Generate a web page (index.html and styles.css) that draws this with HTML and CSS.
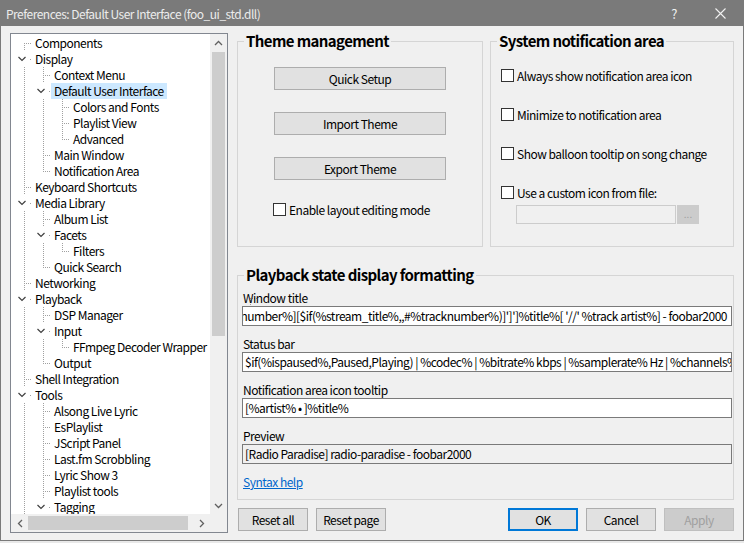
FILE: index.html
```html
<!DOCTYPE html>
<html lang="en">
<head>
    <meta charset="UTF-8">
    <title>Preferences: Default User Interface (foo_ui_std.dll)</title>
    <link rel="stylesheet" href="styles.css">
</head>
<body>
    <div class="window">
        <div class="titlebar">
            <span class="title">Preferences: Default User Interface (foo_ui_std.dll)</span>
            <span class="caption-btn">?</span>
            <span class="caption-btn">
                <svg width="11" height="11" viewBox="0 0 11 11"><path d="M0.5 0.5 L10.5 10.5 M10.5 0.5 L0.5 10.5" stroke="#f2f2f2" stroke-width="1.1" fill="none"/></svg>
            </span>
        </div>

        <div class="body">
            <!-- Page tree -->
            <div class="tree">
                <div class="tree-rows" id="treeRows"></div>
                <div class="vscroll">
                    <div class="arrow">
                        <svg width="9" height="6" viewBox="0 0 9 6"><polyline points="1,5 4.5,1.5 8,5" stroke="#606060" stroke-width="1.3" fill="none"/></svg>
                    </div>
                    <div class="vtrack"><div class="vthumb"></div></div>
                    <div class="arrow">
                        <svg width="9" height="6" viewBox="0 0 9 6"><polyline points="1,1 4.5,4.5 8,1" stroke="#606060" stroke-width="1.3" fill="none"/></svg>
                    </div>
                </div>
                <div class="hscroll">
                    <div class="arrow">
                        <svg width="6" height="9" viewBox="0 0 6 9"><polyline points="5,1 1.5,4.5 5,8" stroke="#606060" stroke-width="1.3" fill="none"/></svg>
                    </div>
                    <div class="htrack"><div class="hthumb"></div></div>
                    <div class="arrow">
                        <svg width="6" height="9" viewBox="0 0 6 9"><polyline points="1,1 4.5,4.5 1,8" stroke="#606060" stroke-width="1.3" fill="none"/></svg>
                    </div>
                </div>
                <div class="scroll-corner"></div>
            </div>

            <!-- Page content -->
            <div class="pages">
                <div class="top-groups">
                    <div class="group theme">
                        <h3>Theme management</h3>
                        <button class="btn wide first">Quick Setup</button>
                        <button class="btn wide">Import Theme</button>
                        <button class="btn wide">Export Theme</button>
                        <label class="check layout-mode"><span class="box"></span>Enable layout editing mode</label>
                    </div>
                    <div class="group notify">
                        <h3>System notification area</h3>
                        <label class="check"><span class="box"></span>Always show notification area icon</label>
                        <label class="check"><span class="box"></span>Minimize to notification area</label>
                        <label class="check"><span class="box"></span>Show balloon tooltip on song change</label>
                        <label class="check"><span class="box"></span>Use a custom icon from file:</label>
                        <div class="file-row">
                            <div class="file-field"></div>
                            <div class="file-btn">...</div>
                        </div>
                    </div>
                </div>

                <div class="group playback">
                    <h3>Playback state display formatting</h3>
                    <div class="field-label first">Window title</div>
                    <div class="edit scrolled"><span>[%album%][ #%tracknumber%][$if(%stream_title%,,#%tracknumber%)]']']%title%[ '//' %track artist%] - foobar2000</span></div>
                    <div class="field-label">Status bar</div>
                    <div class="edit">$if(%ispaused%,Paused,Playing) | %codec% | %bitrate% kbps | %samplerate% Hz | %channels% | %playback_time%[ / %length%]</div>
                    <div class="field-label">Notification area icon tooltip</div>
                    <div class="edit">[%artist% • ]%title%</div>
                    <div class="field-label">Preview</div>
                    <div class="edit readonly">[Radio Paradise] radio-paradise - foobar2000</div>
                    <a class="syntax" href="#">Syntax help</a>
                </div>

                <div class="buttons">
                    <div class="btn-group">
                        <button class="btn">Reset all</button>
                        <button class="btn">Reset page</button>
                    </div>
                    <div class="btn-group">
                        <button class="btn default">OK</button>
                        <button class="btn">Cancel</button>
                        <button class="btn disabled">Apply</button>
                    </div>
                </div>
            </div>
        </div>
    </div>

    <script>
        // depth, label, expandable, selected
        const items = [
            [0, 'Components'],
            [0, 'Display', 1],
            [1, 'Context Menu'],
            [1, 'Default User Interface', 1, 1],
            [2, 'Colors and Fonts'],
            [2, 'Playlist View'],
            [2, 'Advanced'],
            [1, 'Main Window'],
            [1, 'Notification Area'],
            [0, 'Keyboard Shortcuts'],
            [0, 'Media Library', 1],
            [1, 'Album List'],
            [1, 'Facets', 1],
            [2, 'Filters'],
            [1, 'Quick Search'],
            [0, 'Networking'],
            [0, 'Playback', 1],
            [1, 'DSP Manager'],
            [1, 'Input', 1],
            [2, 'FFmpeg Decoder Wrapper'],
            [1, 'Output'],
            [0, 'Shell Integration'],
            [0, 'Tools', 1],
            [1, 'Alsong Live Lyric'],
            [1, 'EsPlaylist'],
            [1, 'JScript Panel'],
            [1, 'Last.fm Scrobbling'],
            [1, 'Lyric Show 3'],
            [1, 'Playlist tools'],
            [1, 'Tagging', 1]
        ];

        // does the node at index i have a sibling further down?
        function hasNext(i) {
            const d = items[i][0];
            for (let j = i + 1; j < items.length; j++) {
                if (items[j][0] < d) return false;
                if (items[j][0] === d) return true;
            }
            return d === 0; // root list continues below the visible part
        }

        const chevron = '<svg class="chevron" width="12" height="16" viewBox="0 0 12 16"><polyline points="0.5,6 4,9.5 7.5,6" stroke="#404040" stroke-width="1.2" fill="none"/></svg>';
        const rows = document.getElementById('treeRows');
        const open = [];

        items.forEach((item, i) => {
            const [depth, text, expandable, selected] = item;
            const next = hasNext(i);
            open[depth] = next;

            const row = document.createElement('div');
            row.className = 'tree-row';

            let html = '';
            for (let a = 0; a < depth; a++) {
                html += `<span class="cell${open[a] ? ' pipe' : ''}"></span>`;
            }
            const kind = i === 0 ? 'first' : (next ? 'tee' : 'elbow');
            html += `<span class="node ${kind}">${expandable ? chevron : ''}</span>`;
            html += `<span class="label${selected ? ' selected' : ''}">${text}</span>`;
            row.innerHTML = html;
            rows.appendChild(row);
        });
    </script>
</body>
</html>
```

FILE: styles.css
```css
* {
    margin: 0;
    padding: 0;
    box-sizing: border-box;
}

html {
    background: #e9e9e9;
}

body {
    font-family: "Noto Sans CJK KR", "Noto Sans", sans-serif;
    font-size: 12px;
    letter-spacing: -0.5px;
    color: #000;
}

.window {
    width: 744px;
    height: 541px;
    background: #f0f0f0;
    border: 1px solid #7a7a7a;
    border-top: none;
}

/* Title bar */
.titlebar {
    height: 26px;
    background: #7a7a7a;
    display: flex;
    align-items: center;
    padding-left: 5px;
    color: #ececec;
}

.titlebar .title {
    flex: 1;
}

.caption-btn {
    width: 46px;
    height: 26px;
    display: flex;
    align-items: center;
    justify-content: center;
    font-size: 13px;
    color: #f2f2f2;
}

.body {
    display: flex;
    align-items: flex-start;
    padding: 7px 0 0 9px;
}

/* Tree */
.tree {
    width: 218px;
    height: 500px;
    border: 1px solid #828790;
    background: #fff;
    display: grid;
    grid-template-columns: 199px 17px;
    grid-template-rows: 480px 18px;
}

.tree-rows {
    overflow: hidden;
    padding-top: 1px;
}

.tree-row {
    display: flex;
    height: 16px;
    padding-left: 5px;
    white-space: nowrap;
}

.cell {
    flex: none;
    width: 19px;
    height: 16px;
}

.node {
    flex: none;
    width: 16px;
    height: 16px;
    display: flex;
}

.pipe {
    background: repeating-linear-gradient(to bottom, #a0a0a0 0 1px, transparent 1px 2px) 8px 0 / 1px 100% no-repeat;
}

.tee {
    background:
        repeating-linear-gradient(to bottom, #a0a0a0 0 1px, transparent 1px 2px) 8px 0 / 1px 100% no-repeat,
        repeating-linear-gradient(to right, #a0a0a0 0 1px, transparent 1px 2px) 8px 8px / 8px 1px no-repeat;
}

.elbow {
    background:
        repeating-linear-gradient(to bottom, #a0a0a0 0 1px, transparent 1px 2px) 8px 0 / 1px 9px no-repeat,
        repeating-linear-gradient(to right, #a0a0a0 0 1px, transparent 1px 2px) 8px 8px / 8px 1px no-repeat;
}

.first {
    background:
        repeating-linear-gradient(to bottom, #a0a0a0 0 1px, transparent 1px 2px) 8px 8px / 1px 8px no-repeat,
        repeating-linear-gradient(to right, #a0a0a0 0 1px, transparent 1px 2px) 8px 8px / 8px 1px no-repeat;
}

.chevron {
    margin-left: 2px;
    background: #fff;
}

.label {
    padding: 0 3px;
    line-height: 16px;
}

.label.selected {
    background: #cce8ff;
}

/* Scrollbars */
.vscroll {
    background: #f0f0f0;
    display: flex;
    flex-direction: column;
}

.vscroll .arrow {
    height: 17px;
    display: flex;
    align-items: center;
    justify-content: center;
}

.vtrack {
    flex: 1;
    padding: 1px 2px;
}

.vthumb {
    height: 284px;
    background: #cdcdcd;
}

.hscroll {
    background: #f0f0f0;
    display: flex;
}

.hscroll .arrow {
    width: 17px;
    display: flex;
    align-items: center;
    justify-content: center;
}

.htrack {
    flex: 1;
    padding: 2px 0;
}

.hthumb {
    width: 160px;
    height: 100%;
    background: #cdcdcd;
}

.scroll-corner {
    background: #f0f0f0;
}

/* Right side pages */
.pages {
    width: 497px;
    margin-left: 9px;
    display: flex;
    flex-direction: column;
}

.top-groups {
    display: flex;
    gap: 7px;
    margin-top: 8px;
}

.group {
    border: 1px solid #d5d5d5;
    display: flex;
    flex-direction: column;
}

.group h3 {
    width: fit-content;
    margin: -11px 0 0 6px;
    padding: 0 2px;
    background: #f0f0f0;
    font-size: 15px;
    line-height: 20px;
    font-weight: bold;
    letter-spacing: -0.6px;
}

.theme {
    width: 246px;
    height: 206px;
}

.notify {
    width: 244px;
    height: 206px;
    padding-left: 10px;
}

.notify h3 {
    margin-left: -4px;
}

.btn {
    font-family: inherit;
    font-size: 12px;
    letter-spacing: inherit;
    color: #000;
    width: 70px;
    height: 23px;
    background: #e1e1e1;
    border: 1px solid #adadad;
}

.btn.wide {
    width: 172px;
    align-self: center;
    margin-top: 22px;
}

.btn.wide.first {
    margin-top: 16px;
}

.btn.default {
    border: 2px solid #0078d7;
}

.btn.disabled {
    background: #cccccc;
    border-color: #bfbfbf;
    color: #a0a0a0;
}

.check {
    display: flex;
    align-items: center;
    gap: 3px;
    height: 16px;
    white-space: nowrap;
}

.box {
    width: 13px;
    height: 13px;
    border: 1px solid #333;
    background: #fff;
}

.layout-mode {
    margin: 21px 0 0 35px;
}

.notify .check {
    margin-top: 23px;
}

.notify h3 + .check {
    margin-top: 16px;
}

.file-row {
    display: flex;
    gap: 1px;
    margin: 5px 0 0 15px;
}

.file-field {
    width: 160px;
    height: 19px;
    border: 1px solid #cccccc;
    background: #f0f0f0;
}

.file-btn {
    width: 22px;
    height: 19px;
    background: #cccccc;
    color: #a0a0a0;
    font-size: 10px;
    letter-spacing: 0;
    text-align: center;
    line-height: 17px;
}

/* Playback formatting */
.playback {
    margin-top: 28px;
    height: 225px;
    padding: 0 1px 0 4px;
}

.playback h3 {
    margin-left: 2px;
}

.field-label {
    line-height: 16px;
    margin-top: 10px;
    padding-left: 1px;
}

.field-label.first {
    margin-top: 5px;
}

.edit {
    height: 20px;
    border: 1px solid #7a7a7a;
    background: #fff;
    padding: 0 2px;
    line-height: 18px;
    white-space: nowrap;
    overflow: hidden;
}

/* caret sits at the end, so the start of the text is scrolled out */
.edit.scrolled {
    display: flex;
    justify-content: flex-end;
    padding-right: 4px;
}

.edit.scrolled span {
    flex: none;
}

.edit.readonly {
    background: #f0f0f0;
}

.syntax {
    margin-top: 10px;
    line-height: 16px;
    padding-left: 1px;
    color: #0066cc;
    width: fit-content;
}

/* Dialog buttons */
.buttons {
    display: flex;
    justify-content: space-between;
    margin-top: 8px;
    padding-left: 1px;
}

.btn-group {
    display: flex;
    gap: 8px;
}
```
